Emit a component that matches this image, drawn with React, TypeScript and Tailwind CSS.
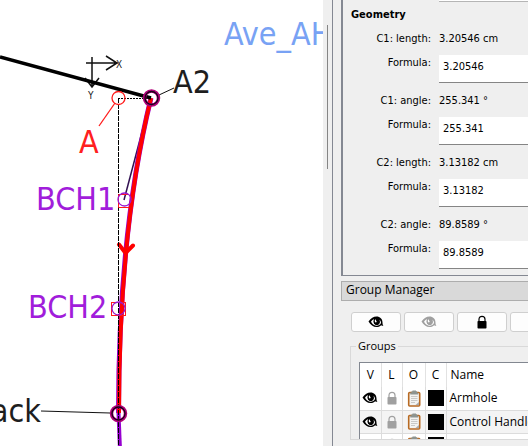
import type { ReactNode } from "react";

interface FormulaRow {
  id: string;
  label: string;
  value: string;
  formula: string;
}

const formulaRows: FormulaRow[] = [
  { id: "c1-length", label: "C1: length:", value: "3.20546 cm", formula: "3.20546" },
  { id: "c1-angle", label: "C1: angle:", value: "255.341 °", formula: "255.341" },
  { id: "c2-length", label: "C2: length:", value: "3.13182 cm", formula: "3.13182" },
  { id: "c2-angle", label: "C2: angle:", value: "89.8589 °", formula: "89.8589" },
];

const groups = ["Armhole", "Control Handles", "Darts"];

function EyeIcon({ className = "" }: { className?: string }) {
  return (
    <svg width="16" height="14" viewBox="0 0 16 14" className={className} aria-hidden="true">
      <path
        d="M0.5 6.5C3 3 5.500 1.500 8.500 1.500C12 1.500 14.500 4 14.500 7.500C14.500 9 14.800 10 15.500 10.800C14.500 11 13.800 10.700 13.300 10.200C9 13.800 3.500 12 0.500 6.500Z"
        fill="currentColor"
      />
      <path d="M3 6.800C4 5.300 5 4.500 6 4.200C5 7 6.500 10 8.700 10.100C11.500 10 12.500 7 11.300 4.700C12.300 5.200 13 6.500 13 8C11 12 5.500 11.500 3 6.800Z" fill="white" />
      <circle cx="8.600" cy="6.800" r="3" fill="currentColor" />
      <path d="M7.500 4.300C6.500 5.200 6.500 6.500 7.500 7.500C9 7.500 8.800 6.200 8.300 6C7.900 5.500 8 4.800 7.500 4.300Z" fill="white" />
    </svg>
  );
}

function LockIcon({ className = "" }: { className?: string }) {
  return (
    <svg width="10" height="14" viewBox="0 0 10 14" className={className} aria-hidden="true">
      <path d="M2 7V4.200C2 0.300 8 0.300 8 4.200V7" fill="none" stroke="currentColor" strokeWidth="1.200" />
      <rect x="0.500" y="6" width="9" height="7.500" rx="0.800" fill="currentColor" />
    </svg>
  );
}

function ClipboardIcon() {
  return (
    <svg width="14" height="17" viewBox="0 0 14 17" aria-hidden="true">
      <rect x="1.700" y="2.500" width="11" height="13.500" rx="1" fill="#f3f3f1" stroke="#b86a23" strokeWidth="1.600" />
      <path d="M3.200 2.500H4.500V1.300H5.500V0.500H9V1.300H10V2.500H11.200V4.500H3.200Z" fill="#8d9490" />
      <path d="M4 6.500H10.500M4 8.500H10.500M4 10.500H10.500M4 12.500H8" stroke="#c9c9c7" />
      <path d="M8.500 15L12 12V15Z" fill="#aaa" />
    </svg>
  );
}

function DrawingCanvas() {
  return (
    <svg
      className="h-full min-w-0 flex-1 overflow-hidden bg-white font-['DejaVu_Sans_Condensed','DejaVu_Sans',sans-serif]"
      role="img"
      aria-label="Pattern drawing"
    >
      {/* origin axes */}
      <g fill="none" stroke="#111" strokeWidth="1.500">
        <path d="M86 63H118M106 56L117 63L106 70" />
        <path d="M92 57V87M85 78L92 87L99 78" />
      </g>
      <text x="116" y="68" fontSize="10" fill="#222">X</text>
      <text x="88" y="99" fontSize="10" fill="#222">Y</text>

      {/* leader lines */}
      <path d="M159 95L174 88M41 411L110 413" stroke="#111" fill="none" />
      <path d="M99 126L115 103" stroke="#ff1a1a" strokeWidth="1.300" />

      {/* curve */}
      <path d="M151 98L124 200" stroke="#321052" strokeWidth="1.500" />
      <path d="M151 98C126 200 118.500 309 118.500 413" fill="none" stroke="#9700d0" strokeWidth="5" />
      <path d="M118.500 413L120 450" fill="none" stroke="#9700d0" strokeWidth="4" />
      <path d="M151 98C126 200 119 309 119 413" fill="none" stroke="#ff0000" strokeWidth="4" />
      <path d="M119 244.500L125.500 253L133 245.500" fill="none" stroke="#ff0000" strokeWidth="4" strokeLinecap="round" />
      <path d="M0 57L151 98" stroke="#000" strokeWidth="3.500" />
      <path d="M118.500 98V446" stroke="#000" strokeDasharray="5 1" />
      <path d="M118 98.500H151" stroke="#000" strokeDasharray="2 1" />

      {/* points */}
      <circle cx="118.500" cy="98" r="6.500" fill="none" stroke="#ff1a1a" strokeWidth="1.300" />
      <g fill="none">
        <circle cx="151.500" cy="98" r="7" stroke="#b00078" strokeWidth="3.500" />
        <circle cx="151.500" cy="98" r="6.500" stroke="#160018" strokeWidth="1.300" />
        <circle cx="118.500" cy="413.500" r="7" stroke="#b00078" strokeWidth="3.500" />
        <circle cx="118.500" cy="413.500" r="6.500" stroke="#160018" strokeWidth="1.300" />
      </g>
      <g fill="none">
        <path d="M129 194.500H118.500V207.500H129" stroke="#ff1a1a" />
        <circle cx="124.500" cy="199.500" r="6.500" stroke="#9a18d0" strokeWidth="1.300" />
        <rect x="111.500" y="302.500" width="14" height="13" stroke="#ff1a1a" />
        <circle cx="118.500" cy="308.500" r="6.500" stroke="#9a18d0" strokeWidth="1.300" />
      </g>

      <text x="224" y="45" fontSize="32" fill="#78a2f4">Ave_AH</text>
      <text x="173" y="93" fontSize="32" fill="#1e1e1e">A2</text>
      <text x="79" y="153" fontSize="32" fill="#ff2020">A</text>
      <text x="36" y="210" fontSize="32" fill="#a11ddb">BCH1</text>
      <text x="28" y="318" fontSize="32" fill="#a11ddb">BCH2</text>
      <text x="41" y="422" fontSize="32" textAnchor="end" fill="#1e1e1e">Back</text>
    </svg>
  );
}

function GeometryPanel() {
  return (
    <section className="ml-2 shrink-0 overflow-hidden border-b border-l-2 border-[#848892] font-['DejaVu_Sans_Condensed','DejaVu_Sans',sans-serif] text-[11px] leading-4">
      <div className="ml-24 h-[2px] border-b border-[#b5b5b5] bg-white" />
      <h2 className="mt-[5px] pl-2 font-bold">Geometry</h2>
      <div className="mt-2 flex flex-col gap-[10px] pb-[6px]">
        {formulaRows.map((row) => (
          <div key={row.id} className="grid grid-cols-[88px_1fr] grid-rows-[24px_28px] gap-x-2">
            <span className="text-right">{row.label}</span>
            <output className="whitespace-nowrap">{row.value}</output>
            <label htmlFor={row.id} className="text-right">Formula:</label>
            <input
              id={row.id}
              defaultValue={row.formula}
              className="h-7 w-full min-w-0 border-b border-[#858585] bg-white px-1 pb-1 outline-none"
            />
          </div>
        ))}
      </div>
    </section>
  );
}

function ToolButton({ label, children }: { label: string; children?: ReactNode }) {
  return (
    <button
      type="button"
      aria-label={label}
      className="flex h-5 w-[50px] shrink-0 items-center justify-center rounded-[3px] border border-[#cfcfcf] bg-[#fdfdfd]"
    >
      {children}
    </button>
  );
}

function GroupsTable() {
  return (
    <div className="ml-2 mt-2 h-[77px] overflow-hidden border-l border-t border-[#828790] bg-white">
      <table className="w-[240px] table-fixed border-collapse text-left">
        <thead>
          <tr className="h-6">
            <th className="w-[21px] border-r border-[#e2e2e2] text-center font-normal">V</th>
            <th className="w-[21px] border-r border-[#e2e2e2] text-center font-normal">L</th>
            <th className="w-[23px] border-r border-[#e2e2e2] text-center font-normal">O</th>
            <th className="w-[21px] border-r border-[#e2e2e2] text-center font-normal">C</th>
            <th className="pl-1 font-normal">Name</th>
          </tr>
        </thead>
        <tbody>
          {groups.map((name, i) => (
            <tr key={name} className={`h-[23px] border-b border-[#dcdcdc] ${i % 2 ? "bg-[#f4f4f4]" : "bg-white"}`}>
              <td className="border-r border-[#dcdcdc]"><EyeIcon className="mx-auto" /></td>
              <td className="border-r border-[#dcdcdc]"><LockIcon className="mx-auto text-[#a0a0a0]" /></td>
              <td className="border-r border-[#dcdcdc] pl-1"><ClipboardIcon /></td>
              <td className="border-r border-[#dcdcdc]"><div className="mx-auto size-4 bg-black" /></td>
              <td className="whitespace-nowrap pl-[3px]">{name}</td>
            </tr>
          ))}
        </tbody>
      </table>
    </div>
  );
}

function GroupManager() {
  return (
    <section className="mt-[5px] pl-2 font-['Open_Sans','Noto_Sans',sans-serif] text-xs leading-4">
      <h2 className="h-5 border border-r-0 border-[#adadad] bg-[#d9d9d9] pl-1">Group Manager</h2>
      <div className="mt-[11px] flex gap-[3px] overflow-hidden pl-[10px]">
        <ToolButton label="Show all groups"><EyeIcon /></ToolButton>
        <ToolButton label="Hide all groups"><EyeIcon className="text-[#a0a0a0]" /></ToolButton>
        <ToolButton label="Lock all groups"><LockIcon /></ToolButton>
        <ToolButton label="Unlock all groups" />
      </div>
      <fieldset className="ml-[9px] mt-[6px] min-w-0 border-b border-l border-t border-[#d9d9d9]">
        <legend className="ml-[5px] px-[2px] text-[11px]">Groups</legend>
        <GroupsTable />
      </fieldset>
    </section>
  );
}

export default function App() {
  return (
    <main className="flex h-screen overflow-hidden bg-[#efefef] text-black">
      <DrawingCanvas />
      <div className="w-[9px] shrink-0 pl-1 pt-[25px]">
        <div className="h-36 w-px bg-[#858585]" />
      </div>
      <aside className="flex w-[196px] shrink-0 flex-col overflow-hidden border-l border-[#848892]">
        <GeometryPanel />
        <GroupManager />
      </aside>
    </main>
  );
}
